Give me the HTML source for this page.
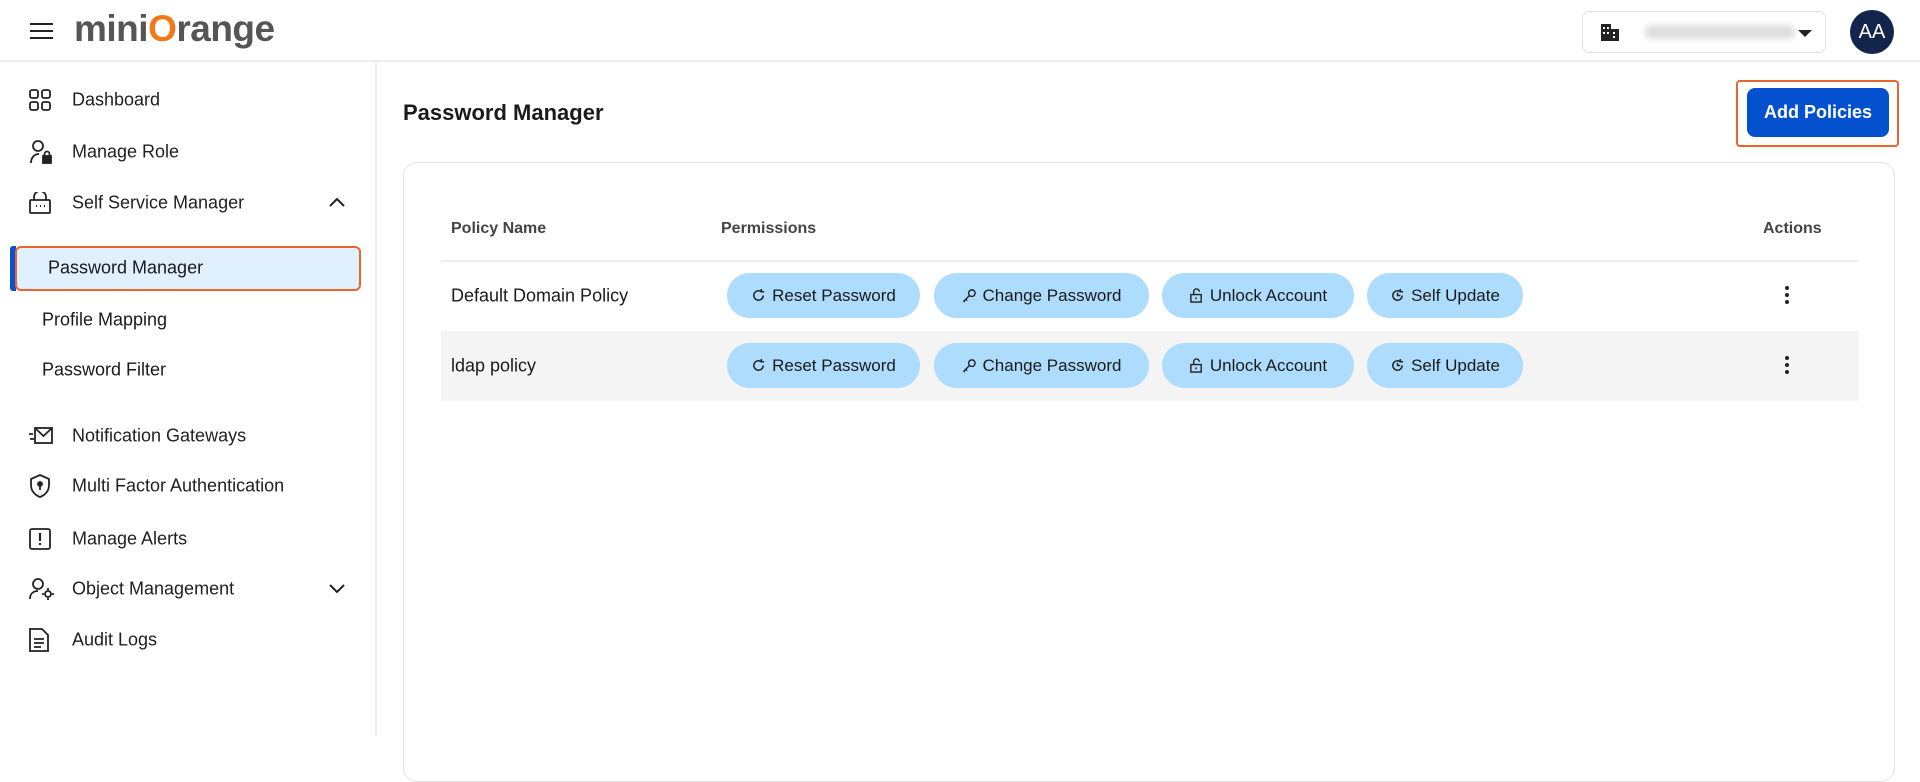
<!DOCTYPE html>
<html><head><meta charset="utf-8"><style>
*{box-sizing:border-box;margin:0;padding:0}
body{width:1920px;height:736px;overflow:hidden;background:#fff;font-family:"Liberation Sans",sans-serif;color:#1a1a1a;position:relative}
.hdr{position:absolute;left:0;top:0;width:1920px;height:62px;border-bottom:2px solid #eee;background:#fff}
.side{position:absolute;left:0;top:62px;width:377px;height:674px;border-right:2px solid #eee}
.mi{position:absolute;left:72px;font-size:18px;color:#1f1f1f;transform:translateY(-50%)}
.ic{position:absolute;left:29px;transform:translateY(-50%)}
.sub{position:absolute;left:42px;font-size:18px;transform:translateY(-50%)}
.card{position:absolute;left:403px;top:162px;width:1492px;height:620px;border:1px solid #e3e3e3;border-radius:14px;background:#fff}
.th{position:absolute;top:229px;font-size:16px;font-weight:bold;color:#444;transform:translateY(-50%)}
.pill{position:absolute;height:45px;border-radius:23px;background:#addcfd;font-size:17px;display:flex;align-items:center;justify-content:center;gap:6px;color:#1a1a1a}
.pill svg{width:15px;height:15px}
.kb{position:absolute;left:1785px;width:5px}
.kb i{display:block;width:4px;height:4px;border-radius:50%;background:#222;margin-bottom:3px}
</style></head><body>
<div class="hdr">
 <svg style="position:absolute;left:30px;top:22px" width="23" height="18"><path d="M0 2h23M0 9h23M0 16h23" stroke="#222" stroke-width="2"/></svg>
 <div style="position:absolute;left:74px;top:8px;font-size:37px;font-weight:bold;color:#555;letter-spacing:-0.5px">mini<span style="color:#f07a1a">O</span>range</div>
 <div style="position:absolute;left:1582px;top:11px;width:244px;height:42px;border:1px solid #e3e3e3;border-radius:8px">
  <svg style="position:absolute;left:18px;top:12px" width="18" height="17"><rect x="0" y="0" width="10" height="17" fill="#222"/><rect x="10" y="5" width="8" height="12" fill="#222"/><g fill="#fff"><rect x="2" y="3" width="2" height="2"/><rect x="6" y="3" width="2" height="2"/><rect x="2" y="8" width="2" height="2"/><rect x="6" y="8" width="2" height="2"/><rect x="12" y="8" width="2" height="2"/><rect x="12" y="12" width="2" height="2"/></g></svg>
  <div style="position:absolute;left:62px;top:13px;width:150px;height:14px;background:#ddd;border-radius:7px;filter:blur(3px)"></div>
  <svg style="position:absolute;left:215px;top:18px" width="14" height="8"><path d="M0 0h14L7 7z" fill="#222"/></svg>
 </div>
 <div style="position:absolute;left:1850px;top:10px;width:44px;height:44px;border-radius:50%;background:#14254d;color:#fff;font-size:20px;display:flex;align-items:center;justify-content:center">AA</div>
</div>
<div class="side"></div>
<svg class="ic" style="top:100px" width="22" height="22" fill="none" stroke="#222" stroke-width="1.8"><rect x="1" y="1" width="8" height="8" rx="2"/><rect x="13" y="1" width="8" height="8" rx="2"/><rect x="1" y="13" width="8" height="8" rx="2"/><rect x="13" y="13" width="8" height="8" rx="2"/></svg>
<div class="mi" style="top:100px">Dashboard</div>
<svg class="ic" style="top:152px" width="24" height="24" fill="none" stroke="#222" stroke-width="1.8"><circle cx="9" cy="6" r="5"/><path d="M2 23c0-5 3-9 8-9"/><rect x="14" y="16" width="8" height="7" fill="#222"/><path d="M15.5 16v-2a2.5 2.5 0 0 1 5 0v2"/></svg>
<div class="mi" style="top:152px">Manage Role</div>
<svg class="ic" style="top:203px" width="22" height="22" fill="none" stroke="#222" stroke-width="1.8"><rect x="1" y="8" width="20" height="13" rx="1"/><path d="M5 8V5a6 6 0 0 1 12 0v3"/><path d="M7 14h1M11 14h1M15 14h1" stroke-width="2"/></svg>
<div class="mi" style="top:203px">Self Service Manager</div>
<svg style="position:absolute;left:329px;top:197px" width="16" height="10"><path d="M1 9l7-7 7 7" fill="none" stroke="#222" stroke-width="2"/></svg>
<div style="position:absolute;left:10px;top:246px;width:6px;height:45px;background:#0a50d0;border-radius:3px 0 0 3px"></div>
<div style="position:absolute;left:15px;top:246px;width:346px;height:45px;background:#e0f0fe;border:2px solid #e8652e;border-radius:6px"></div>
<div class="sub" style="top:268px;left:48px">Password Manager</div>
<div class="sub" style="top:320px">Profile Mapping</div>
<div class="sub" style="top:370px">Password Filter</div>
<svg class="ic" style="top:436px" width="24" height="20" fill="none" stroke="#222" stroke-width="1.8"><rect x="6" y="2" width="17" height="15"/><path d="M6 2l8.5 8L23 2M0 8h4M1 13h4"/></svg>
<div class="mi" style="top:436px">Notification Gateways</div>
<svg class="ic" style="top:486px" width="22" height="24" fill="none" stroke="#222" stroke-width="1.8"><path d="M11 1l9 4v6c0 6-4 10-9 12C6 21 2 17 2 11V5z"/><circle cx="11" cy="10" r="2" fill="#222"/><path d="M11 11v5"/></svg>
<div class="mi" style="top:486px">Multi Factor Authentication</div>
<svg class="ic" style="top:539px" width="22" height="22" fill="none" stroke="#222" stroke-width="1.8"><rect x="1" y="1" width="20" height="20" rx="2"/><path d="M11 5v8M11 15v2" stroke-width="2.2"/></svg>
<div class="mi" style="top:539px">Manage Alerts</div>
<svg class="ic" style="top:589px" width="26" height="22" fill="none" stroke="#222" stroke-width="1.8"><circle cx="9" cy="6" r="5"/><path d="M1 21c0-5 3-8 8-8"/><circle cx="19" cy="16" r="3"/><path d="M19 10v2M19 20v2M13 16h2M23 16h2"/></svg>
<div class="mi" style="top:589px">Object Management</div>
<svg style="position:absolute;left:329px;top:584px" width="16" height="10"><path d="M1 1l7 7 7-7" fill="none" stroke="#222" stroke-width="2"/></svg>
<svg class="ic" style="top:640px" width="20" height="24" fill="none" stroke="#222" stroke-width="1.8"><path d="M1 1h12l6 6v16H1z"/><path d="M5 11h10M5 15h10M5 19h7"/></svg>
<div class="mi" style="top:640px">Audit Logs</div>

<div style="position:absolute;left:403px;top:100px;font-size:22px;font-weight:bold">Password Manager</div>
<div style="position:absolute;left:1736px;top:80px;width:163px;height:67px;border:2px solid #e8652e;border-radius:4px"></div>
<div style="position:absolute;left:1747px;top:88px;width:142px;height:49px;background:#0451cf;border-radius:8px;color:#fff;font-size:18px;font-weight:bold;display:flex;align-items:center;justify-content:center">Add Policies</div>
<div class="card"></div>
<div class="th" style="left:451px">Policy Name</div>
<div class="th" style="left:721px">Permissions</div>
<div class="th" style="left:1763px">Actions</div>
<div style="position:absolute;left:441px;top:260px;width:1418px;height:2px;background:#eee"></div>
<div style="position:absolute;left:441px;top:331px;width:1418px;height:70px;background:#f4f4f4"></div>
<div style="position:absolute;left:451px;top:296px;font-size:18px;transform:translateY(-50%)">Default Domain Policy</div>
<div style="position:absolute;left:451px;top:366px;font-size:18px;transform:translateY(-50%)">ldap policy</div>
<div class="pill" style="left:727px;top:273px;width:193px"><svg viewBox="0 0 16 16" fill="none" stroke="#222" stroke-width="1.6"><path d="M13 8a5 5 0 1 1-2-4M11 1v3h3"/></svg>Reset Password</div>
<div class="pill" style="left:934px;top:273px;width:215px"><svg viewBox="0 0 16 16" fill="none" stroke="#222" stroke-width="1.5"><circle cx="10.5" cy="5.5" r="3.5"/><path d="M8 8l-6 6 1 1M4 12l1.5 1.5"/></svg>Change Password</div>
<div class="pill" style="left:1162px;top:273px;width:192px"><svg viewBox="0 0 16 16" fill="none" stroke="#222" stroke-width="1.5"><rect x="2" y="7" width="11" height="8"/><path d="M5 7V4a3 3 0 0 1 6 0M7.5 10v2"/></svg>Unlock Account</div>
<div class="pill" style="left:1367px;top:273px;width:156px"><svg viewBox="0 0 16 16" fill="none" stroke="#222" stroke-width="1.6"><path d="M13 8a5 5 0 1 1-2-4M11 1v3h3M8 5v3h3"/></svg>Self Update</div>
<div class="pill" style="left:727px;top:343px;width:193px"><svg viewBox="0 0 16 16" fill="none" stroke="#222" stroke-width="1.6"><path d="M13 8a5 5 0 1 1-2-4M11 1v3h3"/></svg>Reset Password</div>
<div class="pill" style="left:934px;top:343px;width:215px"><svg viewBox="0 0 16 16" fill="none" stroke="#222" stroke-width="1.5"><circle cx="10.5" cy="5.5" r="3.5"/><path d="M8 8l-6 6 1 1M4 12l1.5 1.5"/></svg>Change Password</div>
<div class="pill" style="left:1162px;top:343px;width:192px"><svg viewBox="0 0 16 16" fill="none" stroke="#222" stroke-width="1.5"><rect x="2" y="7" width="11" height="8"/><path d="M5 7V4a3 3 0 0 1 6 0M7.5 10v2"/></svg>Unlock Account</div>
<div class="pill" style="left:1367px;top:343px;width:156px"><svg viewBox="0 0 16 16" fill="none" stroke="#222" stroke-width="1.6"><path d="M13 8a5 5 0 1 1-2-4M11 1v3h3M8 5v3h3"/></svg>Self Update</div>
<div class="kb" style="top:286px"><i></i><i></i><i></i></div>
<div class="kb" style="top:356px"><i></i><i></i><i></i></div>
</body></html>
